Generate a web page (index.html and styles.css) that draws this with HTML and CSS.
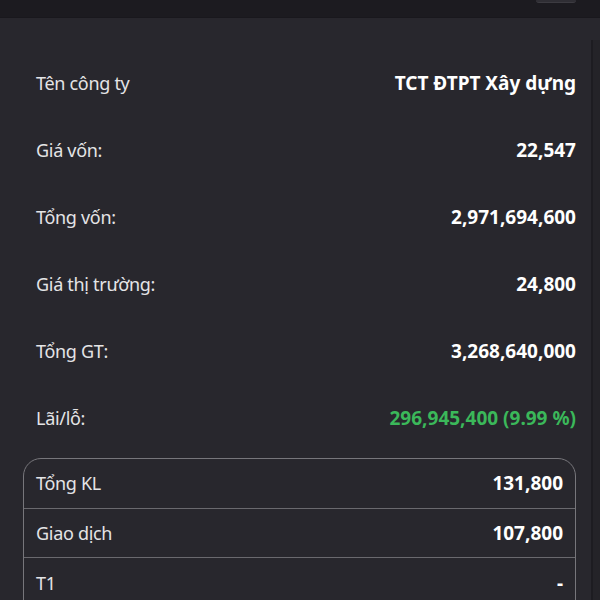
FILE: index.html
```html
<!DOCTYPE html>
<html lang="vi">
<head>
<meta charset="utf-8">
<link rel="stylesheet" href="styles.css">
</head>
<body>
<div class="topbar"><span class="pill"></span></div>
<div class="main">
  <div class="content">
    <div class="row"><span class="label">Tên công ty</span><span class="value">TCT ĐTPT Xây dựng</span></div>
    <div class="row"><span class="label">Giá vốn:</span><span class="value">22,547</span></div>
    <div class="row"><span class="label">Tổng vốn:</span><span class="value">2,971,694,600</span></div>
    <div class="row"><span class="label">Giá thị trường:</span><span class="value">24,800</span></div>
    <div class="row"><span class="label">Tổng GT:</span><span class="value">3,268,640,000</span></div>
    <div class="row"><span class="label">Lãi/lỗ:</span><span class="value up">296,945,400 (9.99 %)</span></div>
    <div class="card">
      <div class="crow"><span class="label">Tổng KL</span><span class="value">131,800</span></div>
      <div class="crow"><span class="label">Giao dịch</span><span class="value">107,800</span></div>
      <div class="crow"><span class="label">T1</span><span class="value">-</span></div>
    </div>
  </div>
  <div class="track"></div>
</div>
</body>
</html>
```
FILE: styles.css
```css
* { box-sizing: border-box; }
html, body { margin: 0; padding: 0; }
body {
  width: 600px;
  height: 600px;
  overflow: hidden;
  background: #28272d;
  font-family: "Noto Sans", "Open Sans", sans-serif;
  color: #e6e6e8;
}
.topbar {
  height: 18px;
  background: #1c1b20;
  border-bottom: 1px solid #19181d;
  display: flex;
  justify-content: flex-end;
  padding-right: 24px;
}
.pill {
  width: 40px;
  height: 3px;
  border-radius: 0 0 16px 16px;
  background: #2f2e34;
  border-bottom: 1px solid #3c3b41;
}
.main {
  display: flex;
  height: 582px;
}
.content {
  flex: 1;
  padding: 31px 15px 0 23px;
}
.track {
  width: 9px;
  margin-top: 22px;
  background: #242328;
  border-left: 2px solid #1d1c21;
}
.row {
  height: 67px;
  display: flex;
  align-items: center;
  justify-content: space-between;
  padding-left: 13px;
}
.label {
  font-size: 18px;
  color: #e4e4e6;
  letter-spacing: -0.3px;
}
.value {
  font-size: 19px;
  font-weight: 700;
  color: #ffffff;
}
.value.up { color: #3bb85a; }
.card {
  margin-top: 7px;
  border: 1.5px solid #77767b;
  border-radius: 18px;
  height: 200px;
}
.crow {
  height: 49.5px;
  display: flex;
  align-items: center;
  justify-content: space-between;
  padding: 0 12px 0 12px;
  border-bottom: 1.5px solid #6a696e;
}
.crow:last-child { border-bottom: none; }
```
